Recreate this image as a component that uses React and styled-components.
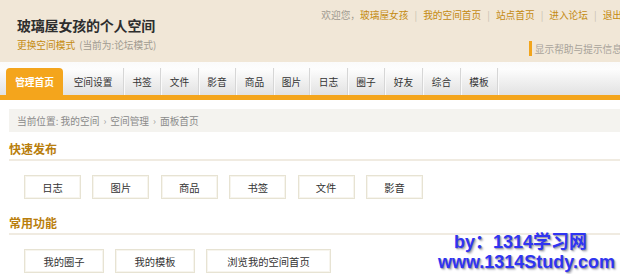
import styled, { createGlobalStyle } from "styled-components";

const GlobalStyle = createGlobalStyle`
  html, body {
    margin: 0;
    padding: 0;
    background: #fff;
    overflow: hidden;
  }
  body {
    font-family: "Noto Sans CJK SC", "Noto Sans", sans-serif;
    color: #333;
  }
`;

const Page = styled.div`
  position: relative;
  width: 622px;
  height: 274px;
  overflow: hidden;
`;

const Header = styled.div`
  height: 62px;
  display: flex;
  justify-content: space-between;
  background: #f1e7d7;
`;

const Brand = styled.div`
  display: flex;
  flex-direction: column;
  padding: 16px 0 0 17px;
`;

const Title = styled.h1`
  margin: 0;
  font-size: 14px;
  line-height: 18px;
  font-weight: 700;
  color: #2e2e2e;
  letter-spacing: -0.2px;
`;

const ModeLine = styled.div`
  margin-top: 5px;
  font-size: 9.7px;
  line-height: 12px;
  white-space: nowrap;
`;

const OrangeLink = styled.span`
  color: #c48a10;
`;

const Muted = styled.span`
  color: #a09a90;
  margin-left: ${(p) => p.$gap || 0}px;
`;

const UserBox = styled.div`
  display: flex;
  flex-direction: column;
  align-items: flex-end;
  padding-top: 9px;
`;

const NavLinks = styled.div`
  display: flex;
  align-items: center;
  font-size: 9.7px;
  line-height: 12px;
  white-space: nowrap;
`;

const Sep = styled.span`
  color: #c7bfb2;
  margin: 0 6px;
`;

const HelpToggle = styled.div`
  display: flex;
  align-items: center;
  margin-top: 20px;
  font-size: 9.7px;
  color: #a8a39a;
  white-space: nowrap;
  &::before {
    content: "";
    width: 3px;
    height: 15px;
    margin-right: 3px;
    background: #f2a51c;
  }
`;

const TabBar = styled.div`
  display: flex;
  align-items: flex-end;
  height: 33px;
  padding-left: 6px;
  background: linear-gradient(#fbfbfb 0%, #fdfdfd 22%, #f1f1f1 55%, #e2e2e2 100%);
  border-bottom: 5px solid #f4a51c;
`;

const Tab = styled.div`
  height: 27px;
  display: flex;
  align-items: center;
  justify-content: center;
  box-sizing: border-box;
  width: ${(p) => p.$w}px;
  font-size: 9.7px;
  white-space: nowrap;
  color: ${(p) => (p.$active ? "#fff" : "#333")};
  font-weight: ${(p) => (p.$active ? 700 : 400)};
  background: ${(p) => (p.$active ? "#f4a51c" : "transparent")};
  border-radius: ${(p) => (p.$active ? "4px 4px 0 0" : "0")};
  border-right: ${(p) => (p.$active ? "none" : "1px solid #d6d6d6")};
  box-shadow: ${(p) => (p.$active ? "none" : "1px 0 0 #fafafa")};
`;

const Breadcrumb = styled.div`
  margin: 9px 0 0 9px;
  height: 23px;
  display: flex;
  align-items: center;
  padding-left: 8px;
  background: #f4f3ef;
  font-size: 9.7px;
  color: #8a8a8a;
  white-space: nowrap;
`;

const Crumb = styled.span`
  margin: 0 4px;
  color: #9a9a9a;
`;

const Section = styled.div`
  margin-left: 9px;
`;

const SectionTitle = styled.h2`
  margin: ${(p) => p.$top}px 0 0;
  padding-bottom: 1px;
  font-size: 12px;
  line-height: 18px;
  font-weight: 700;
  color: #b97e0c;
  border-bottom: 2px solid #f0ebe1;
`;

const ButtonRow = styled.div`
  display: flex;
  gap: ${(p) => p.$gap}px;
  margin: 14px 0 0 15px;
`;

const ActionButton = styled.div`
  width: ${(p) => p.$w}px;
  height: 24px;
  box-sizing: border-box;
  display: flex;
  align-items: center;
  justify-content: center;
  font-size: 10.3px;
  color: #333;
  background: #fff;
  border: 1px solid #e7e3d3;
  box-shadow: inset 0 0 0 1px #f7f5ee;
  white-space: nowrap;
`;

const Watermark = styled.div`
  position: absolute;
  right: 7px;
  bottom: 2px;
  display: flex;
  flex-direction: column;
  align-items: flex-end;
  font-family: "Liberation Sans", Arial, "Noto Sans CJK SC", sans-serif;
  font-weight: 700;
  font-size: 18px;
  line-height: 20px;
  color: #2f34f2;
  text-shadow: 1px 1px 1px #9a9aa8, 2px 2px 2px #c8c8d0;
`;

const WatermarkLine = styled.div`
  margin-right: ${(p) => p.$indent || 0}px;
`;

const tabs = [
  ["空间设置", 61],
  ["书签", 37],
  ["文件", 38],
  ["影音", 37],
  ["商品", 38],
  ["图片", 36],
  ["日志", 38],
  ["圈子", 37],
  ["好友", 38],
  ["综合", 38],
  ["模板", 37],
];

const quick = ["日志", "图片", "商品", "书签", "文件", "影音"];
const common = [
  ["我的圈子", 80],
  ["我的模板", 80],
  ["浏览我的空间首页", 125],
];

const App = () => {
  return (
    <Page>
      <GlobalStyle />
      <Header>
        <Brand>
          <Title>玻璃屋女孩的个人空间</Title>
          <ModeLine>
            <OrangeLink>更换空间模式</OrangeLink>
            <Muted $gap={4}>(当前为:论坛模式)</Muted>
          </ModeLine>
        </Brand>
        <UserBox>
          <NavLinks>
            <Muted>欢迎您，</Muted>
            <OrangeLink>玻璃屋女孩</OrangeLink>
            <Sep>|</Sep>
            <OrangeLink>我的空间首页</OrangeLink>
            <Sep>|</Sep>
            <OrangeLink>站点首页</OrangeLink>
            <Sep>|</Sep>
            <OrangeLink>进入论坛</OrangeLink>
            <Sep>|</Sep>
            <OrangeLink>退出</OrangeLink>
          </NavLinks>
          <HelpToggle>显示帮助与提示信息</HelpToggle>
        </UserBox>
      </Header>

      <TabBar>
        <Tab $active $w={57}>管理首页</Tab>
        {tabs.map(([label, w]) => (
          <Tab key={label} $w={w}>{label}</Tab>
        ))}
      </TabBar>

      <Breadcrumb>
        当前位置: 我的空间<Crumb>›</Crumb>空间管理<Crumb>›</Crumb>面板首页
      </Breadcrumb>

      <Section>
        <SectionTitle $top={8}>快速发布</SectionTitle>
        <ButtonRow $gap={11.4}>
          {quick.map((label) => (
            <ActionButton key={label} $w={57}>{label}</ActionButton>
          ))}
        </ButtonRow>

        <SectionTitle $top={15}>常用功能</SectionTitle>
        <ButtonRow $gap={11}>
          {common.map(([label, w]) => (
            <ActionButton key={label} $w={w}>{label}</ActionButton>
          ))}
        </ButtonRow>
      </Section>

      <Watermark>
        <WatermarkLine $indent={28}>by：1314学习网</WatermarkLine>
        <WatermarkLine>www.1314Study.com</WatermarkLine>
      </Watermark>
    </Page>
  );
};

export default App;
